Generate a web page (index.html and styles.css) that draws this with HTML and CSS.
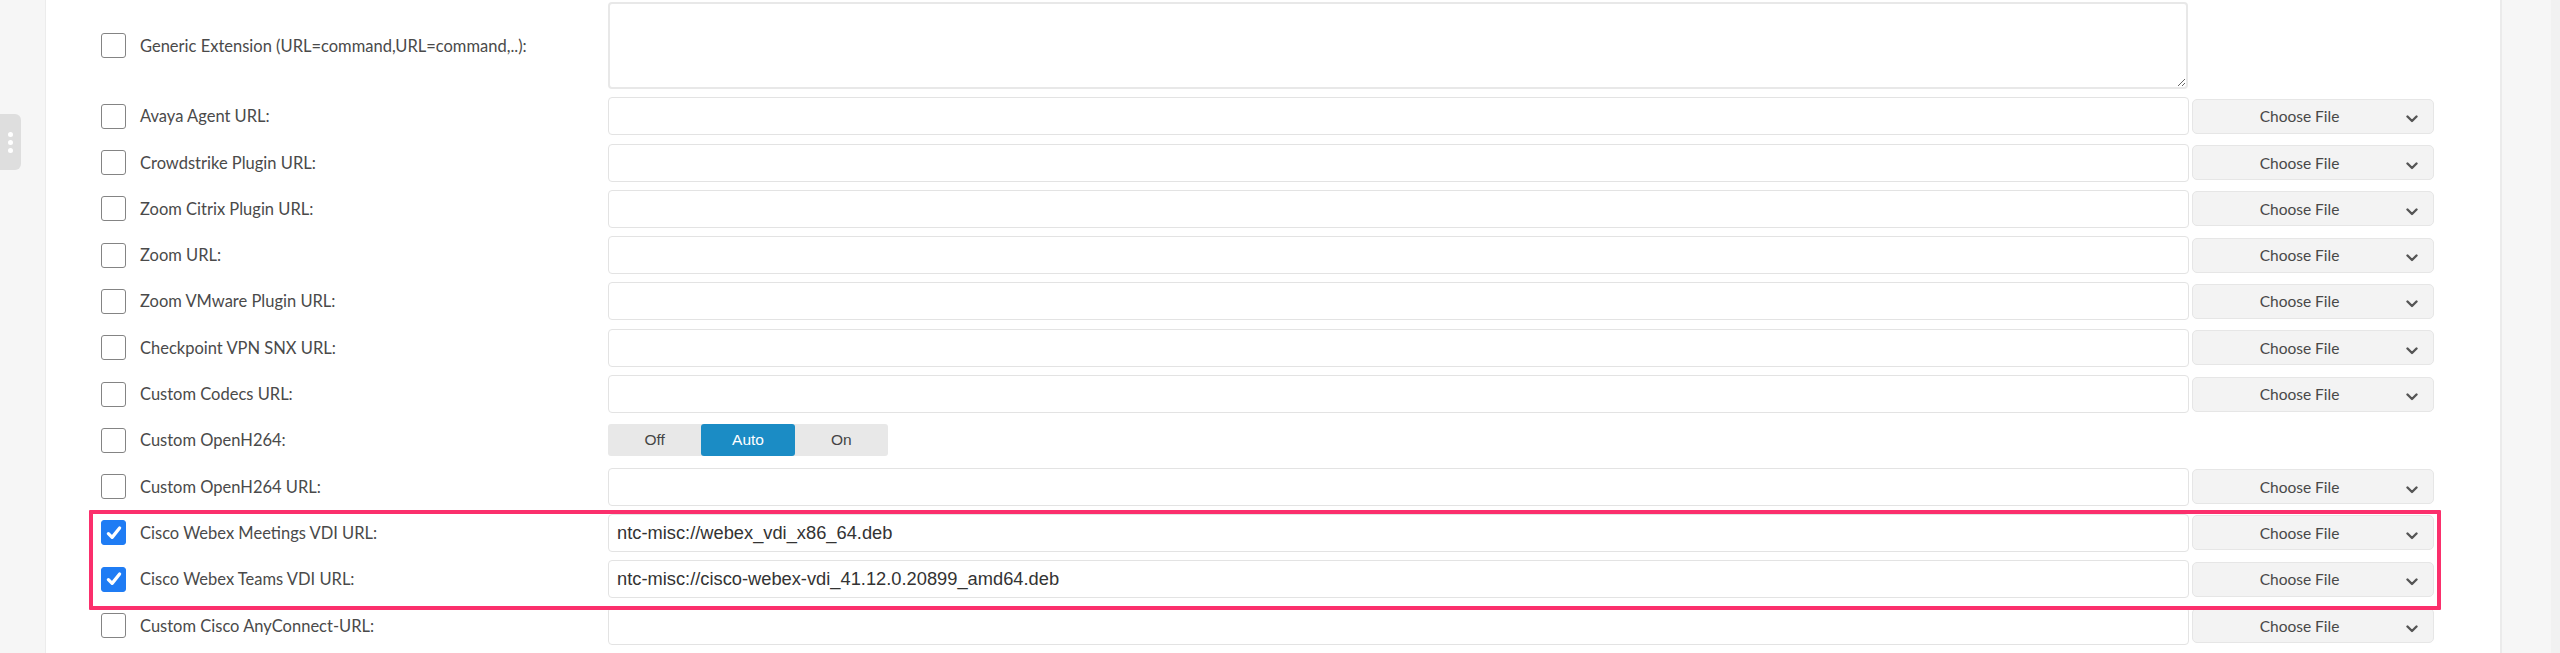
FILE: index.html
```html
<!DOCTYPE html>
<html lang="en">
<head>
    <meta charset="UTF-8">
    <title>Extensions</title>
    <link rel="stylesheet" href="styles.css">
</head>
<body>
<div class="page">
    <!-- left rail with the collapse handle -->
    <aside class="rail-left">
        <div class="handle"><i></i><i></i><i></i></div>
    </aside>

    <main class="content">
        <form class="ext-form">
            <div class="row row-tall">
                <label class="opt"><span class="box"></span><span>Generic Extension (URL=command,URL=command,..):</span></label>
                <textarea class="ext-text"></textarea>
            </div>

            <div class="row">
                <label class="opt"><span class="box"></span><span>Avaya Agent URL:</span></label>
                <input class="url" type="text">
                <button type="button" class="file"><span>Choose File</span><svg class="chev" viewBox="0 0 12 8"><path d="M1.5 1.5 6 6l4.5-4.5"/></svg></button>
            </div>
            <div class="row">
                <label class="opt"><span class="box"></span><span>Crowdstrike Plugin URL:</span></label>
                <input class="url" type="text">
                <button type="button" class="file"><span>Choose File</span><svg class="chev" viewBox="0 0 12 8"><path d="M1.5 1.5 6 6l4.5-4.5"/></svg></button>
            </div>
            <div class="row">
                <label class="opt"><span class="box"></span><span>Zoom Citrix Plugin URL:</span></label>
                <input class="url" type="text">
                <button type="button" class="file"><span>Choose File</span><svg class="chev" viewBox="0 0 12 8"><path d="M1.5 1.5 6 6l4.5-4.5"/></svg></button>
            </div>
            <div class="row">
                <label class="opt"><span class="box"></span><span>Zoom URL:</span></label>
                <input class="url" type="text">
                <button type="button" class="file"><span>Choose File</span><svg class="chev" viewBox="0 0 12 8"><path d="M1.5 1.5 6 6l4.5-4.5"/></svg></button>
            </div>
            <div class="row">
                <label class="opt"><span class="box"></span><span>Zoom VMware Plugin URL:</span></label>
                <input class="url" type="text">
                <button type="button" class="file"><span>Choose File</span><svg class="chev" viewBox="0 0 12 8"><path d="M1.5 1.5 6 6l4.5-4.5"/></svg></button>
            </div>
            <div class="row">
                <label class="opt"><span class="box"></span><span>Checkpoint VPN SNX URL:</span></label>
                <input class="url" type="text">
                <button type="button" class="file"><span>Choose File</span><svg class="chev" viewBox="0 0 12 8"><path d="M1.5 1.5 6 6l4.5-4.5"/></svg></button>
            </div>
            <div class="row">
                <label class="opt"><span class="box"></span><span>Custom Codecs URL:</span></label>
                <input class="url" type="text">
                <button type="button" class="file"><span>Choose File</span><svg class="chev" viewBox="0 0 12 8"><path d="M1.5 1.5 6 6l4.5-4.5"/></svg></button>
            </div>
            <div class="row">
                <label class="opt"><span class="box"></span><span>Custom OpenH264:</span></label>
                <div class="toggle">
                    <span class="seg">Off</span>
                    <span class="seg active">Auto</span>
                    <span class="seg">On</span>
                </div>
            </div>
            <div class="row">
                <label class="opt"><span class="box"></span><span>Custom OpenH264 URL:</span></label>
                <input class="url" type="text">
                <button type="button" class="file"><span>Choose File</span><svg class="chev" viewBox="0 0 12 8"><path d="M1.5 1.5 6 6l4.5-4.5"/></svg></button>
            </div>

            <!-- marked rows -->
            <div class="highlight">
                <div class="row">
                    <label class="opt"><span class="box checked"><svg viewBox="0 0 16 16"><path d="M3.5 8.5 6.5 11.5 12.5 4"/></svg></span><span>Cisco Webex Meetings VDI URL:</span></label>
                    <input class="url" type="text" value="ntc-misc://webex_vdi_x86_64.deb">
                    <button type="button" class="file"><span>Choose File</span><svg class="chev" viewBox="0 0 12 8"><path d="M1.5 1.5 6 6l4.5-4.5"/></svg></button>
                </div>
                <div class="row">
                    <label class="opt"><span class="box checked"><svg viewBox="0 0 16 16"><path d="M3.5 8.5 6.5 11.5 12.5 4"/></svg></span><span>Cisco Webex Teams VDI URL:</span></label>
                    <input class="url" type="text" value="ntc-misc://cisco-webex-vdi_41.12.0.20899_amd64.deb">
                    <button type="button" class="file"><span>Choose File</span><svg class="chev" viewBox="0 0 12 8"><path d="M1.5 1.5 6 6l4.5-4.5"/></svg></button>
                </div>
            </div>

            <div class="row">
                <label class="opt"><span class="box"></span><span>Custom Cisco AnyConnect-URL:</span></label>
                <input class="url" type="text">
                <button type="button" class="file"><span>Choose File</span><svg class="chev" viewBox="0 0 12 8"><path d="M1.5 1.5 6 6l4.5-4.5"/></svg></button>
            </div>
        </form>
    </main>

    <aside class="rail-right"><div class="rail-edge"></div></aside>
</div>
</body>
</html>
```

FILE: styles.css
```css
html, body {
    margin: 0;
    height: 100%;
    overflow: hidden;
}

body {
    font-family: Lato, "Open Sans", sans-serif;
    color: #4a4a4a;
    background-color: #fff;
}

.page {
    display: flex;
    height: 100vh;
}

/* Left rail */
.rail-left {
    width: 45px;
    flex: 0 0 45px;
    background-color: #f6f6f6;
    border-right: 1px solid #ececec;
    padding-top: 114px;
}

.handle {
    width: 21px;
    height: 56px;
    background-color: #dedede;
    border-radius: 0 6px 6px 0;
    display: flex;
    flex-direction: column;
    align-items: center;
    justify-content: center;
    gap: 3px;
}

.handle i {
    width: 5px;
    height: 5px;
    border-radius: 50%;
    background-color: #fff;
}

/* Right rail */
.rail-right {
    flex: 0 0 58px;
    background-color: #f6f6f6;
    border-left: 2px solid #ebebeb;
    display: flex;
    justify-content: flex-end;
}

.rail-edge {
    width: 9px;
    background-color: #f1f1f1;
}

/* Form area */
.content {
    flex: 1;
    padding: 2px 66px 0 55px;
}

.ext-form {
    display: flex;
    flex-direction: column;
    gap: 8.3px;
}

.row {
    display: grid;
    grid-template-columns: 507px 1fr 245px;
    align-items: center;
    height: 38px;
}

.row-tall {
    height: 87px;
}

.opt {
    display: flex;
    align-items: center;
    gap: 14px;
    font-size: 16.5px;
    color: #4a4a4a;
}

.box {
    width: 25px;
    height: 25px;
    box-sizing: border-box;
    border: 1.5px solid #848484;
    border-radius: 3px;
    background-color: #fff;
    flex: 0 0 auto;
    display: flex;
    align-items: center;
    justify-content: center;
}

.box.checked {
    background-color: #1f7cf4;
    border-color: #1f7cf4;
}

.box svg {
    width: 20px;
    height: 20px;
    fill: none;
    stroke: #fff;
    stroke-width: 2.6;
    stroke-linecap: round;
    stroke-linejoin: round;
}

.ext-text {
    grid-column: 2;
    height: 87px;
    box-sizing: border-box;
    border: 2px solid #e8e8e8;
    border-radius: 4px;
    resize: vertical;
    margin: 0;
    width: calc(100% - 1px);
}

.url {
    height: 38px;
    box-sizing: border-box;
    border: 1px solid #e3e3e3;
    border-radius: 4px;
    padding: 0 8px;
    font-family: "Liberation Sans", Arial, sans-serif;
    font-size: 18.3px;
    color: #333;
    outline: none;
    margin: 0;
}

.file {
    margin-left: 3px;
    height: 35px;
    box-sizing: border-box;
    border: 1px solid #e6e6e6;
    border-radius: 5px;
    background-color: #f3f3f3;
    display: flex;
    align-items: center;
    padding: 0 15px 0 0;
    font-family: Lato, sans-serif;
    font-size: 15.5px;
    color: #484848;
    cursor: pointer;
}

.file span {
    flex: 1;
    text-align: center;
}

.chev {
    width: 12px;
    height: 8px;
    fill: none;
    stroke: #555;
    stroke-width: 2.4;
    stroke-linecap: round;
    stroke-linejoin: round;
    margin-top: 6px;
}

/* Off / Auto / On switch */
.toggle {
    display: flex;
    width: 280px;
    height: 32px;
    background-color: #e8e8e8;
    border-radius: 3px;
    font-family: "Liberation Sans", Arial, sans-serif;
    font-size: 15.5px;
    color: #444;
}

.seg {
    flex: 1;
    display: flex;
    align-items: center;
    justify-content: center;
    border-radius: 3px;
}

.seg.active {
    background-color: #1b8cc5;
    color: #fff;
}

/* Red marker round the two webex rows */
.highlight {
    position: relative;
    display: flex;
    flex-direction: column;
    gap: 8.3px;
}

.highlight::before {
    content: "";
    position: absolute;
    left: -12px;
    right: -7px;
    top: -4px;
    bottom: -12px;
    border: 4px solid #fb2f6c;
    border-radius: 1px;
    pointer-events: none;
}
```
